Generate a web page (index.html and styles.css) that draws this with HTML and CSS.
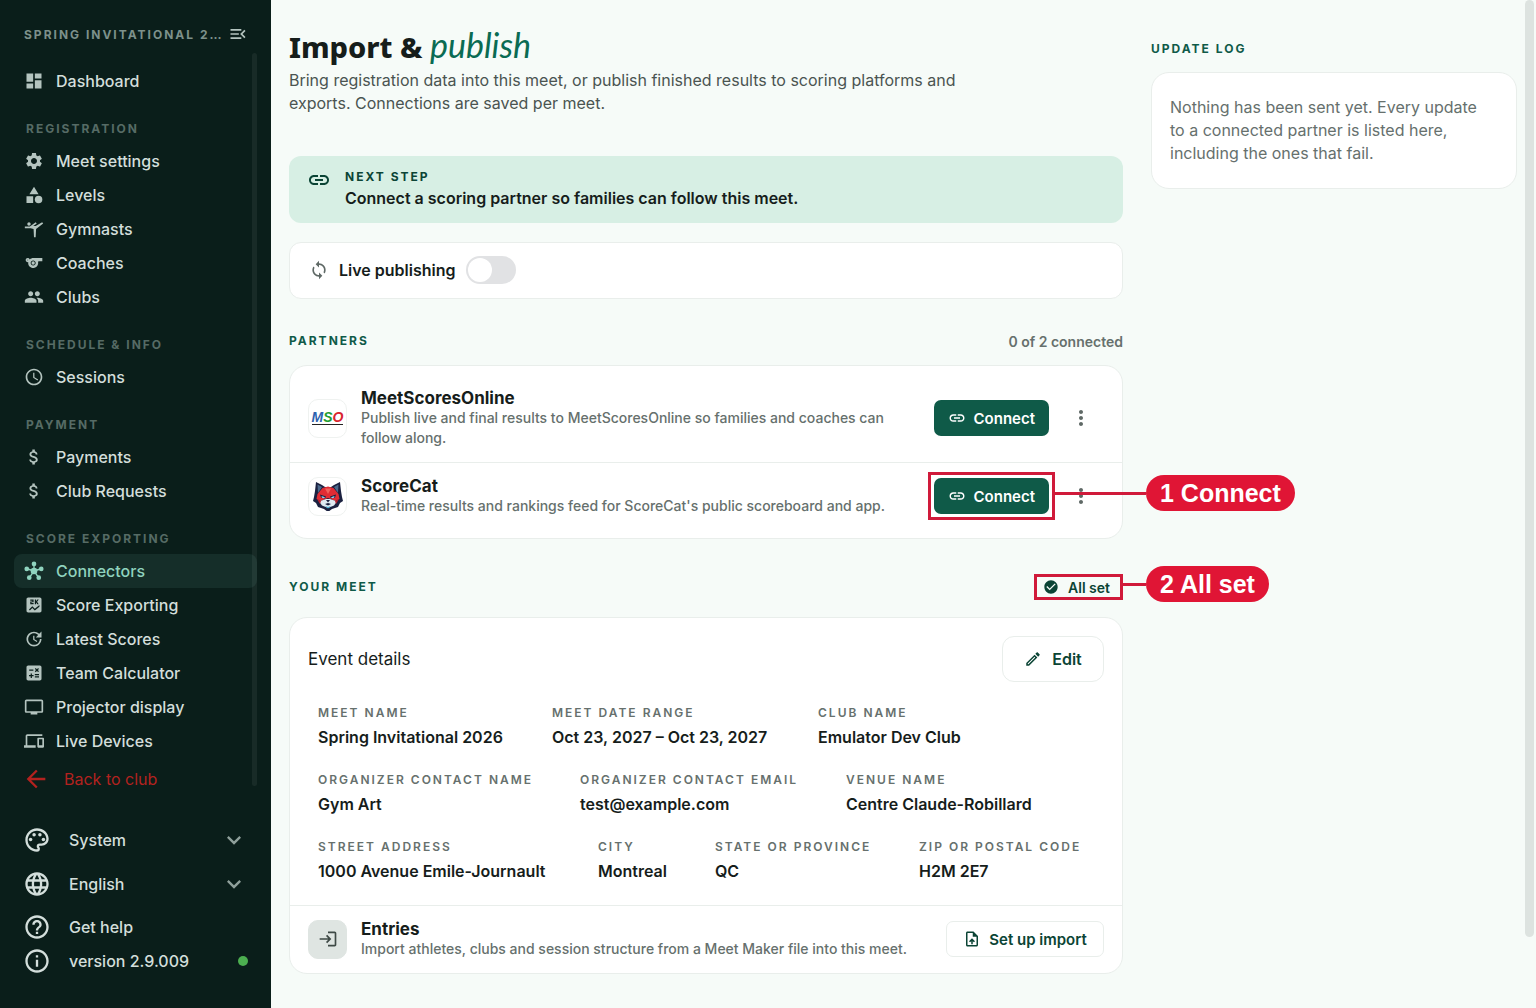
FILE: index.html
```html
<!DOCTYPE html>
<html lang="en">
<head>
<meta charset="utf-8">
<meta name="viewport" content="width=device-width, initial-scale=1">
<title>Import &amp; publish</title>
<link rel="stylesheet" href="styles.css">
</head>
<body>
<svg class="sprite" aria-hidden="true">
  <symbol id="i-link" viewBox="0 0 24 24"><path d="M3.9 12c0-1.71 1.39-3.1 3.1-3.1h4V7H7c-2.76 0-5 2.24-5 5s2.24 5 5 5h4v-1.9H7c-1.71 0-3.1-1.39-3.1-3.1zM8 13h8v-2H8v2zm9-6h-4v1.9h4c1.71 0 3.1 1.39 3.1 3.1s-1.39 3.1-3.1 3.1h-4V17h4c2.76 0 5-2.24 5-5s-2.24-5-5-5z"/></symbol>
  <symbol id="i-money" viewBox="0 0 24 24"><path d="M11.8 10.9c-2.27-.59-3-1.2-3-2.15 0-1.09 1.01-1.85 2.7-1.85 1.78 0 2.44.85 2.5 2.1h2.21c-.07-1.72-1.12-3.3-3.21-3.81V3h-3v2.16c-1.94.42-3.5 1.68-3.5 3.61 0 2.31 1.91 3.46 4.7 4.13 2.5.6 3 1.48 3 2.41 0 .69-.49 1.79-2.7 1.79-2.06 0-2.87-.92-2.98-2.1h-2.2c.12 2.19 1.76 3.42 3.68 3.83V21h3v-2.15c1.95-.37 3.5-1.5 3.5-3.55 0-2.84-2.43-3.81-4.7-4.4z"/></symbol>
  <symbol id="i-chevron" viewBox="0 0 24 24"><path d="M16.59 8.59 12 13.17 7.41 8.59 6 10l6 6 6-6z"/></symbol>
  <symbol id="i-more" viewBox="0 0 24 24"><path d="M12 8c1.1 0 2-.9 2-2s-.9-2-2-2-2 .9-2 2 .9 2 2 2zm0 2c-1.1 0-2 .9-2 2s.9 2 2 2 2-.9 2-2-.9-2-2-2zm0 6c-1.1 0-2 .9-2 2s.9 2 2 2 2-.9 2-2-.9-2-2-2z"/></symbol>
</svg>

<aside class="sidebar">
  <div class="side-head">
    <span class="side-title">SPRING INVITATIONAL 2…</span>
    <button class="icon-btn" aria-label="Collapse menu"><svg class="ic20" viewBox="0 0 24 24"><path d="M3 18h13v-2H3v2zM3 13h10v-2H3v2zm0-7v2h13V6H3zm18 9.59L17.42 12 21 8.41 19.59 7l-5 5 5 5L21 15.59z"/></svg></button>
  </div>
  <nav class="nav">
    <a class="nav-item" href="#"><svg class="ic20" viewBox="0 0 24 24"><path d="M3 13h8V3H3v10zm0 8h8v-6H3v6zm10 0h8V11h-8v10zm0-18v6h8V3h-8z"/></svg>Dashboard</a>
    <h2 class="nav-label">REGISTRATION</h2>
    <a class="nav-item" href="#"><svg class="ic20" viewBox="0 0 24 24"><path d="M19.14 12.94c.04-.3.06-.61.06-.94 0-.32-.02-.64-.07-.94l2.03-1.58c.18-.14.23-.41.12-.61l-1.92-3.32c-.12-.22-.37-.29-.59-.22l-2.39.96c-.5-.38-1.03-.7-1.62-.94l-.36-2.54c-.04-.24-.24-.41-.48-.41h-3.84c-.24 0-.43.17-.47.41l-.36 2.54c-.59.24-1.13.57-1.62.94l-2.39-.96c-.22-.08-.47 0-.59.22L2.74 8.87c-.12.21-.08.47.12.61l2.03 1.58c-.05.3-.09.63-.09.94s.02.64.07.94l-2.03 1.58c-.18.14-.23.41-.12.61l1.92 3.32c.12.22.37.29.59.22l2.39-.96c.5.38 1.03.7 1.62.94l.36 2.54c.05.24.24.41.48.41h3.84c.24 0 .44-.17.47-.41l.36-2.54c.59-.24 1.13-.56 1.62-.94l2.39.96c.22.08.47 0 .59-.22l1.92-3.32c.12-.22.07-.47-.12-.61l-2.01-1.58zM12 15.6c-1.98 0-3.6-1.62-3.6-3.6s1.62-3.6 3.6-3.6 3.6 1.62 3.6 3.6-1.62 3.6-3.6 3.6z"/></svg>Meet settings</a>
    <a class="nav-item" href="#"><svg class="ic20" viewBox="0 0 24 24"><path d="M12 2 6.5 11h11zM3 13.5h8v8H3z"/><circle cx="17.5" cy="17.5" r="4.5"/></svg>Levels</a>
    <a class="nav-item" href="#"><svg class="ic20" viewBox="0 0 24 24"><path d="M4 6c0-1.1.9-2 2-2s2 .9 2 2-.9 2-2 2-2-.9-2-2zM1 9h6l7-5 1.31 1.52-4.17 2.98H14L21.8 4 23 5.4 14.5 12 14 22h-2l-.5-10L8 11H1V9z"/></svg>Gymnasts</a>
    <a class="nav-item" href="#"><svg class="ic20" viewBox="0 0 24 24"><path d="M11.23 6c-1.66 0-3.22.66-4.36 1.73C6.54 6.73 5.61 6 4.5 6 3.12 6 2 7.12 2 8.5S3.12 11 4.5 11c.21 0 .41-.03.61-.08-.05.25-.09.51-.1.78-.18 3.68 2.95 6.68 6.68 6.27 2.55-.28 4.68-2.26 5.19-4.77.15-.71.15-1.4.06-2.06-.09-.6.38-1.13.99-1.13H22V6H11.23zM4.5 9c-.28 0-.5-.22-.5-.5s.22-.5.5-.5.5.22.5.5-.22.5-.5.5zm6.5 6c-1.66 0-3-1.34-3-3s1.34-3 3-3 3 1.34 3 3-1.34 3-3 3z"/><circle cx="11" cy="12" r="2"/></svg>Coaches</a>
    <a class="nav-item" href="#"><svg class="ic20" viewBox="0 0 24 24"><path d="M16 11c1.66 0 2.99-1.34 2.99-3S17.66 5 16 5c-1.66 0-3 1.34-3 3s1.34 3 3 3zm-8 0c1.66 0 2.99-1.34 2.99-3S9.66 5 8 5C6.34 5 5 6.34 5 8s1.34 3 3 3zm0 2c-2.33 0-7 1.17-7 3.5V19h14v-2.5c0-2.33-4.67-3.5-7-3.5zm8 0c-.29 0-.62.02-.97.05 1.16.84 1.97 1.97 1.97 3.45V19h6v-2.5c0-2.33-4.67-3.5-7-3.5z"/></svg>Clubs</a>
    <h2 class="nav-label">SCHEDULE &amp; INFO</h2>
    <a class="nav-item" href="#"><svg class="ic20" viewBox="0 0 24 24"><path d="M11.99 2C6.47 2 2 6.48 2 12s4.47 10 9.99 10C17.52 22 22 17.52 22 12S17.52 2 11.99 2zM12 20c-4.42 0-8-3.58-8-8s3.58-8 8-8 8 3.58 8 8-3.58 8-8 8zm.5-13H11v6l5.25 3.15.75-1.23-4.5-2.67z"/></svg>Sessions</a>
    <h2 class="nav-label">PAYMENT</h2>
    <a class="nav-item" href="#"><svg class="ic20"><use href="#i-money"/></svg>Payments</a>
    <a class="nav-item" href="#"><svg class="ic20"><use href="#i-money"/></svg>Club Requests</a>
    <h2 class="nav-label">SCORE EXPORTING</h2>
    <a class="nav-item active" href="#" aria-current="page"><svg class="ic20" viewBox="0 0 24 24"><path d="M12 12V4M12 12 3.500 9.300M12 12l8.500-2.700M12 12l-5.500 8M12 12l5.500 8" stroke="currentColor" stroke-width="1.600"/><circle cx="12" cy="12" r="4"/><circle cx="12" cy="3.500" r="2.800"/><circle cx="3.300" cy="9.500" r="2.800"/><circle cx="20.700" cy="9.500" r="2.800"/><circle cx="6.300" cy="20" r="2.800"/><circle cx="17.700" cy="20" r="2.800"/></svg>Connectors</a>
    <a class="nav-item" href="#"><svg class="ic20" viewBox="0 0 24 24"><path fill-rule="evenodd" d="M19 3H5c-1.100 0-2 .9-2 2v14c0 1.100.9 2 2 2h14c1.100 0 2-.9 2-2V5c0-1.100-.9-2-2-2zM7.500 5.500h4v3.200H9v.8h2.500v1.500h-4V7.800H10V7H7.500zM13 5.500h1.500v2l1.500-2h1.700l-2 2.700 2 2.800H16l-1.500-2V11H13zM6 17.500l4-4 3 3 5.500-4.500v2L13 18.500l-3-3-3 3z"/></svg>Score Exporting</a>
    <a class="nav-item" href="#"><svg class="ic20" viewBox="0 0 24 24"><path d="M21 10.120h-6.780l2.740-2.820c-2.730-2.700-7.150-2.800-9.880-.1-2.730 2.710-2.730 7.080 0 9.790s7.150 2.710 9.880 0C18.320 15.650 19 14.080 19 12.100h2c0 1.980-.88 4.550-2.640 6.290-3.510 3.480-9.210 3.480-12.720 0-3.500-3.470-3.530-9.110-.02-12.580s9.140-3.470 12.650 0L21 3v7.120zM12.500 8v4.250l3.500 2.080-.72 1.210L11 13V8h1.500z"/></svg>Latest Scores</a>
    <a class="nav-item" href="#"><svg class="ic20" viewBox="0 0 24 24"><path fill-rule="evenodd" d="M19 3H5c-1.100 0-2 .9-2 2v14c0 1.100.9 2 2 2h14c1.100 0 2-.9 2-2V5c0-1.100-.9-2-2-2zm-5.970 4.060L14.090 6l1.410 1.410L16.910 6l1.060 1.060-1.410 1.410 1.410 1.410-1.060 1.060-1.410-1.400-1.410 1.410-1.060-1.060 1.410-1.410-1.410-1.420zM6.250 7.720h5v1.500h-5v-1.500zM11.500 16h-2v2H8v-2H6v-1.500h2v-2h1.500v2h2V16zm6.500 1.250h-5v-1.500h5v1.500zm0-2.500h-5v-1.500h5v1.500z"/></svg>Team Calculator</a>
    <a class="nav-item" href="#"><svg class="ic20" viewBox="0 0 24 24"><path d="M21 3H3c-1.100 0-2 .9-2 2v12c0 1.100.9 2 2 2h5v2h8v-2h5c1.100 0 1.990-.9 1.990-2L23 5c0-1.100-.9-2-2-2zm0 14H3V5h18v12z"/></svg>Projector display</a>
    <a class="nav-item" href="#"><svg class="ic20" viewBox="0 0 24 24"><path d="M4 6h18V4H4c-1.100 0-2 .9-2 2v11H0v3h14v-3H4V6zm19 2h-6c-.55 0-1 .45-1 1v10c0 .55.45 1 1 1h6c.55 0 1-.45 1-1V9c0-.55-.45-1-1-1zm-1 9h-4v-7h4v7z"/></svg>Live Devices</a>
    <a class="nav-back" href="#"><svg class="ic28" viewBox="0 0 24 24"><path d="M20 11H7.830l5.590-5.590L12 4l-8 8 8 8 1.410-1.410L7.830 13H20v-2z"/></svg>Back to club</a>
    <span class="side-scroll"></span>
  </nav>
  <div class="side-foot">
    <button class="foot-item"><svg class="ic28" viewBox="0 0 24 24"><path d="M12 22C6.490 22 2 17.510 2 12S6.490 2 12 2s10 4.040 10 9c0 3.310-2.690 6-6 6h-1.770c-.28 0-.5.22-.5.500 0 .12.050.23.130.33.410.47.640 1.060.640 1.670A2.500 2.500 0 0 1 12 22zm0-18c-4.410 0-8 3.590-8 8s3.590 8 8 8c.28 0 .5-.22.500-.5a.54.54 0 0 0-.14-.35c-.41-.46-.63-1.050-.63-1.650a2.500 2.500 0 0 1 2.500-2.500H16c2.210 0 4-1.790 4-4 0-3.860-3.590-7-8-7z"/><circle cx="6.500" cy="11.500" r="1.500"/><circle cx="9.500" cy="7.500" r="1.500"/><circle cx="14.500" cy="7.500" r="1.500"/><circle cx="17.500" cy="11.500" r="1.500"/></svg><span>System</span><svg class="ic28 dim"><use href="#i-chevron"/></svg></button>
    <button class="foot-item"><svg class="ic28" viewBox="0 0 24 24"><path d="M11.990 2C6.470 2 2 6.480 2 12s4.470 10 9.990 10C17.520 22 22 17.520 22 12S17.520 2 11.990 2zm6.930 6h-2.950c-.32-1.250-.78-2.450-1.380-3.560 1.840.63 3.370 1.910 4.330 3.560zM12 4.040c.83 1.200 1.480 2.530 1.910 3.960h-3.820c.43-1.430 1.080-2.760 1.910-3.960zM4.260 14C4.100 13.360 4 12.690 4 12s.1-1.360.26-2h3.380c-.08.66-.14 1.320-.14 2s.06 1.340.14 2H4.260zm.82 2h2.950c.32 1.250.78 2.450 1.380 3.560-1.840-.63-3.370-1.900-4.330-3.560zm2.950-8H5.080c.96-1.660 2.490-2.930 4.330-3.560C8.810 5.550 8.350 6.750 8.030 8zM12 19.960c-.83-1.200-1.480-2.530-1.910-3.960h3.820c-.43 1.430-1.080 2.760-1.910 3.960zM14.340 14H9.660c-.09-.66-.16-1.320-.16-2s.07-1.350.16-2h4.680c.09.650.16 1.320.16 2s-.07 1.340-.16 2zm.25 5.560c.6-1.110 1.060-2.310 1.380-3.560h2.950c-.96 1.650-2.490 2.930-4.330 3.560zM16.360 14c.08-.66.14-1.320.14-2s-.06-1.340-.14-2h3.380c.16.640.26 1.310.26 2s-.1 1.360-.26 2h-3.380z"/></svg><span>English</span><svg class="ic28 dim"><use href="#i-chevron"/></svg></button>
    <a class="foot-item short first" href="#"><svg class="ic28" viewBox="0 0 24 24"><path d="M11 18h2v-2h-2v2zm1-16C6.480 2 2 6.480 2 12s4.480 10 10 10 10-4.480 10-10S17.520 2 12 2zm0 18c-4.410 0-8-3.590-8-8s3.590-8 8-8 8 3.590 8 8-3.590 8-8 8zm0-14c-2.210 0-4 1.790-4 4h2c0-1.100.9-2 2-2s2 .9 2 2c0 2-3 1.750-3 5h2c0-2.250 3-2.500 3-5 0-2.210-1.790-4-4-4z"/></svg><span>Get help</span></a>
    <div class="foot-item short"><svg class="ic28" viewBox="0 0 24 24"><path d="M11 7h2v2h-2zm0 4h2v6h-2zm1-9C6.480 2 2 6.480 2 12s4.480 10 10 10 10-4.480 10-10S17.520 2 12 2zm0 18c-4.410 0-8-3.590-8-8s3.590-8 8-8 8 3.590 8 8-3.590 8-8 8z"/></svg><span>version 2.9.009</span><i class="status"></i></div>
  </div>
</aside>

<main class="main">
  <div class="content">
    <header class="intro">
      <h1 class="title">Import &amp; <em>publish</em></h1>
      <p class="lead">Bring registration data into this meet, or publish finished results to scoring platforms and exports. Connections are saved per meet.</p>
    </header>

    <section class="banner">
      <svg class="ic24" viewBox="0 0 24 24"><use href="#i-link"/></svg>
      <div>
        <h2 class="overline dark">NEXT STEP</h2>
        <p class="banner-text">Connect a scoring partner so families can follow this meet.</p>
      </div>
    </section>

    <section class="live card">
      <svg class="ic20" viewBox="0 0 24 24"><path d="M12 4V1L8 5l4 4V6c3.310 0 6 2.690 6 6 0 1.010-.25 1.970-.7 2.800l1.460 1.460C19.540 15.030 20 13.570 20 12c0-4.420-3.580-8-8-8zm0 14c-3.310 0-6-2.690-6-6 0-1.010.25-1.970.7-2.800L5.240 7.740C4.460 8.970 4 10.430 4 12c0 4.420 3.580 8 8 8v3l4-4-4-4v3z"/></svg>
      <label for="live">Live publishing</label>
      <input class="switch" type="checkbox" role="switch" id="live">
    </section>

    <div class="section-head">
      <h2 class="overline">PARTNERS</h2>
      <span class="count">0 of 2 connected</span>
    </div>
    <section class="partners card">
      <article class="row">
        <div class="logo mso"><span class="m">M</span><span class="s">S</span><span class="o">O</span></div>
        <div class="row-body">
          <h3 class="row-title">MeetScoresOnline</h3>
          <p class="row-desc">Publish live and final results to MeetScoresOnline so families and coaches can follow along.</p>
        </div>
        <button class="btn primary"><svg class="ic18"><use href="#i-link"/></svg>Connect</button>
        <button class="icon-btn more" aria-label="MeetScoresOnline options"><svg class="ic24"><use href="#i-more"/></svg></button>
      </article>
      <article class="row">
        <div class="logo">
          <svg class="cat" viewBox="0 0 30 30"><path fill="#1b2140" d="M3 1l6 3 3 2h6l3-2 6-3 1 9 1 6 1 4-3 2-2 4-6 2-4 3-4-3-6-2-2-4-3-2 1-4 1-6z"/><path fill="#4c6a8c" d="M4.500 3.500 9 6l-4 6zM25.500 3.500 21 6l4 6z"/><path fill="#e02c34" d="M9.500 7 15 5.500 20.500 7l5 6 1 5-4 2-7.500-3-7.500 3-4-2 1-5z"/><path fill="#f0635c" d="M12 7.500h6L15 13z"/><path fill="#1b2140" d="m7 13.500 6 2-1 2-4-1zM23 13.500l-6 2 1 2 4-1z"/><path fill="#8fd0ee" d="m8.500 15 3.500 1.300-1 .9-2-.5zM21.500 15l-3.500 1.300 1 .9 2-.5z"/><path fill="#dfeaf2" d="m13 18-7 2.500L9 24.500l6 2.500 6-2.500 3-4-7-2.500z"/><path fill="#b81f2e" d="m4 18 4 2-1 3zM26 18l-4 2 1 3z"/><path fill="#1b2140" d="M13 19h4l-2 2.500zM12 23l3-1 3 1-3 1.500z"/><path fill="#3fb2d8" d="m12 25 3 1 3-1-3 2.500z"/></svg>
        </div>
        <div class="row-body">
          <h3 class="row-title">ScoreCat</h3>
          <p class="row-desc">Real-time results and rankings feed for ScoreCat's public scoreboard and app.</p>
        </div>
        <div class="marked marked-connect">
          <button class="btn primary"><svg class="ic18"><use href="#i-link"/></svg>Connect</button>
          <div class="callout"><span class="lead-line"></span><span class="pill">1 Connect</span></div>
        </div>
        <button class="icon-btn more" aria-label="ScoreCat options"><svg class="ic24"><use href="#i-more"/></svg></button>
      </article>
    </section>

    <div class="section-head second">
      <h2 class="overline">YOUR MEET</h2>
      <div class="marked marked-set">
        <span class="all-set"><svg class="ic16" viewBox="0 0 24 24"><path d="M12 2C6.480 2 2 6.480 2 12s4.480 10 10 10 10-4.480 10-10S17.520 2 12 2zm-2 15-5-5 1.410-1.410L10 14.170l7.590-7.590L19 8l-9 9z"/></svg>All set</span>
        <div class="callout"><span class="lead-line"></span><span class="pill">2 All set</span></div>
      </div>
    </div>
    <section class="meet card">
      <div class="details">
        <div class="details-head">
          <h3 class="details-title">Event details</h3>
          <button class="btn outline large"><svg class="ic18" viewBox="0 0 24 24"><path d="m14.060 9.020.92.920L5.920 19H5v-.92l9.060-9.060M17.660 3c-.25 0-.51.1-.7.290l-1.830 1.830 3.750 3.750 1.830-1.830c.39-.39.39-1.020 0-1.410l-2.340-2.340c-.2-.2-.45-.29-.71-.29zm-3.600 3.190L3 17.250V21h3.750L17.810 9.940l-3.750-3.750z"/></svg>Edit</button>
        </div>
        <dl class="fields fields-a">
          <div><dt>MEET NAME</dt><dd>Spring Invitational 2026</dd></div>
          <div><dt>MEET DATE RANGE</dt><dd>Oct 23, 2027 – Oct 23, 2027</dd></div>
          <div><dt>CLUB NAME</dt><dd>Emulator Dev Club</dd></div>
        </dl>
        <dl class="fields fields-b">
          <div><dt>ORGANIZER CONTACT NAME</dt><dd>Gym Art</dd></div>
          <div><dt>ORGANIZER CONTACT EMAIL</dt><dd>test@example.com</dd></div>
          <div><dt>VENUE NAME</dt><dd>Centre Claude-Robillard</dd></div>
        </dl>
        <dl class="fields fields-c">
          <div><dt>STREET ADDRESS</dt><dd>1000 Avenue Emile-Journault</dd></div>
          <div><dt>CITY</dt><dd>Montreal</dd></div>
          <div><dt>STATE OR PROVINCE</dt><dd>QC</dd></div>
          <div><dt>ZIP OR POSTAL CODE</dt><dd>H2M 2E7</dd></div>
        </dl>
      </div>
      <div class="row entries">
        <div class="logo tile"><svg class="ic20" viewBox="0 0 24 24"><path d="M11 7 9.600 8.400l2.600 2.600H2v2h10.200l-2.600 2.600L11 17l5-5-5-5zm9 12h-8v2h8c1.100 0 2-.9 2-2V5c0-1.100-.9-2-2-2h-8v2h8v14z"/></svg></div>
        <div class="row-body">
          <h3 class="row-title">Entries</h3>
          <p class="row-desc">Import athletes, clubs and session structure from a Meet Maker file into this meet.</p>
        </div>
        <button class="btn outline"><svg class="ic18" viewBox="0 0 24 24"><path d="M14 2H6c-1.100 0-1.990.9-1.990 2L4 20c0 1.100.89 2 1.990 2H18c1.100 0 2-.9 2-2V8l-6-6zm4 18H6V4h7v5h5v11zM8 15.010l1.410 1.410L11 14.840V19h2v-4.160l1.590 1.590L16 15.010 12.010 11 8 15.010z"/></svg>Set up import</button>
      </div>
    </section>
  </div>

  <aside class="log">
    <h2 class="overline">UPDATE LOG</h2>
    <p class="log-card card">Nothing has been sent yet. Every update to a connected partner is listed here, including the ones that fail.</p>
  </aside>
  <span class="page-scroll"></span>
</main>
</body>
</html>
```
FILE: styles.css
```css
* { box-sizing: border-box; }
body, h1, h2, h3, p, dl, dd { margin: 0; }
body {
  display: flex;
  min-height: 100vh;
  background: #f6fbf8;
  color: #161d1b;
  font-family: Inter, "Liberation Sans", sans-serif;
  font-size: 16px;
}
button { font: inherit; color: inherit; background: none; border: 0; padding: 0; cursor: pointer; }
a { color: inherit; text-decoration: none; }
svg { fill: currentColor; flex: none; display: block; }
.sprite { position: absolute; width: 0; height: 0; }
.ic16 { width: 16px; height: 16px; }
.ic18 { width: 18px; height: 18px; }
.ic20 { width: 20px; height: 20px; }
.ic24 { width: 24px; height: 24px; }
.ic28 { width: 28px; height: 28px; }

/* Sidebar */
.sidebar {
  flex: none;
  width: 271px;
  background: #0a1e1a;
  color: #d3dedb;
  font-weight: 500;
}
.side-head {
  display: flex;
  align-items: center;
  justify-content: space-between;
  height: 64px;
  padding: 4px 23px 0 24px;
  color: #7d918b;
}
.side-title {
  white-space: nowrap;
  font-size: 12px;
  font-weight: 700;
  letter-spacing: 2px;
}
.side-head .icon-btn { color: #b4c4bf; }
.nav { position: relative; padding: 0 14px; }
.nav-item {
  display: flex;
  align-items: center;
  gap: 12px;
  height: 34px;
  padding-left: 10px;
  border-radius: 8px;
}
.nav-item svg { color: #b4c4bf; }
.nav-item.active, .nav-item.active svg { color: #8fd3be; }
.nav-item.active { background: #152e29; }
.nav-label {
  height: 46px;
  padding: 22px 0 0 12px;
  color: #566b65;
  font-size: 12px;
  line-height: 18px;
  font-weight: 700;
  letter-spacing: 2px;
}
.nav-back {
  display: flex;
  align-items: center;
  gap: 14px;
  height: 42px;
  padding-left: 8px;
  color: #b3221f;
  font-weight: 400;
}
.side-scroll {
  position: absolute;
  top: -11px;
  right: 14px;
  bottom: 14px;
  width: 5px;
  border-radius: 3px;
  background: rgba(255, 255, 255, 0.06);
}
.side-foot { padding: 18px 23px 0; }
.foot-item {
  display: flex;
  align-items: center;
  gap: 18px;
  width: 100%;
  height: 44px;
  text-align: left;
}
.foot-item span { flex: 1; }
.foot-item.short { height: 34px; }
.foot-item.first { margin-top: 4px; }
.dim { color: #8fa09b; }
.status { width: 10px; height: 10px; border-radius: 50%; background: #4caf50; }

/* Main area */
.main {
  position: relative;
  flex: 1;
  min-width: 0;
  display: grid;
  grid-template-columns: minmax(0, 834fr) minmax(0, 366fr);
  gap: 28px;
  align-items: start;
  padding: 28px 19px 24px 18px;
}
.page-scroll {
  position: absolute;
  top: 0;
  right: 2px;
  width: 9px;
  height: 93vh;
  border-radius: 5px;
  background: #dde3e0;
}
.card { background: #fff; border: 1px solid #e9eeeb; border-radius: 18px; }
.overline {
  color: #0f5a48;
  font-size: 12px;
  line-height: 18px;
  font-weight: 700;
  letter-spacing: 2px;
}
.overline.dark { color: #0b4435; }

.title {
  margin-bottom: 4px;
  font-family: "Noto Sans", sans-serif;
  font-size: 29px;
  line-height: 37px;
  font-weight: 800;
}
.title em { color: #0a6b53; font-family: Lato, sans-serif; font-size: 34px; line-height: 34px; font-weight: 400; }
.lead { max-width: 700px; color: #4a5451; line-height: 23px; }

.banner {
  display: flex;
  gap: 14px;
  margin-top: 41px;
  padding: 12px 18px;
  border-radius: 12px;
  background: #d7efe4;
  color: #0b4435;
}
.banner-text { color: #161d1b; font-weight: 600; line-height: 25px; }
.live {
  display: flex;
  align-items: center;
  gap: 10px;
  margin-top: 19px;
  padding: 13px 19px 14px;
  border-radius: 12px;
  color: #5f6966;
}
.live label { color: #161d1b; font-weight: 600; }
.switch {
  appearance: none;
  width: 50px;
  height: 28px;
  margin: 0;
  padding: 2px;
  border-radius: 14px;
  background: #e1e2e4;
}
.switch::before { content: ""; display: block; width: 24px; height: 24px; border-radius: 50%; background: #fff; }
.switch:checked::before { margin-left: auto; }

.section-head {
  display: flex;
  align-items: center;
  justify-content: space-between;
  height: 26px;
  margin: 29px 0 11px;
}
.section-head.second { margin: 35px 0 17px; }
.count { color: #66706d; font-size: 14px; font-weight: 600; }

.partners { padding: 9px 0 8px; }
.row {
  display: flex;
  align-items: center;
  gap: 14px;
  padding: 13px 18px 14px;
}
.row + .row { border-top: 1px solid #e9eeeb; }
.row-body { flex: 1; min-width: 0; }
.row-title { font-size: 17px; font-weight: 700; line-height: 20px; }
.row-desc { max-width: 560px; color: #66706d; font-size: 14px; font-weight: 500; line-height: 20px; }
.logo {
  flex: none;
  display: flex;
  align-items: center;
  justify-content: center;
  width: 39px;
  height: 39px;
  border: 1px solid #eff2f0;
  border-radius: 10px;
}
.logo.tile { background: #dfe5e2; border-color: #dfe5e2; color: #3f4a46; }
.cat { width: 30px; height: 30px; }
.mso {
  font-family: "Liberation Sans", sans-serif;
  font-size: 14px;
  font-weight: 700;
  font-style: italic;
  line-height: 13px;
}
.mso span { border-bottom: 1px solid #222; }
.mso .m { color: #2d62ae; }
.mso .s { color: #1f9e33; }
.mso .o { color: #d8242f; }

.btn {
  display: flex;
  align-items: center;
  justify-content: center;
  gap: 8px;
  height: 36px;
  padding: 0 14px;
  border-radius: 7px;
  font-size: 15px;
  font-weight: 600;
  white-space: nowrap;
}
.btn.primary { min-width: 115px; background: #0f5a48; color: #fff; }
.btn.outline { min-width: 158px; border: 1px solid #e9eeeb; color: #0b4435; background: #fff; }
.btn.large { min-width: 102px; height: 46px; border-radius: 12px; gap: 10px; font-size: 16px; }
.icon-btn { flex: none; }
.more { width: 36px; height: 36px; display: grid; place-items: center; margin-right: 5px; color: #5f6966; }

/* Numbered callouts laid over the page */
.marked { position: relative; }
.marked::after {
  content: "";
  position: absolute;
  inset: -6px;
  border: 3px solid #d01a3a;
  pointer-events: none;
}
.marked-set::after { inset: 0; }
.callout {
  position: absolute;
  z-index: 2;
  left: calc(100% + 5px);
  top: calc(50% - 3px);
  display: flex;
  align-items: center;
  transform: translateY(-50%);
}
.marked-set .callout { left: 100%; }
.lead-line { width: 92px; height: 3px; background: #d01a3a; }
.marked-set .lead-line { width: 23px; }
.pill {
  height: 36px;
  padding: 0 14px;
  border-radius: 18px;
  background: #e01535;
  color: #fff;
  font: 700 25px/36px "Liberation Sans", sans-serif;
  white-space: nowrap;
}
.all-set {
  display: flex;
  align-items: center;
  gap: 9px;
  height: 26px;
  padding: 0 13px 0 9px;
  color: #0b4435;
  font-size: 14px;
  font-weight: 600;
}

.details { padding: 18px 18px 20px; }
.details-head { display: flex; align-items: center; justify-content: space-between; }
.details-title { font-size: 17px; font-weight: 400; }
.fields { display: grid; margin: 21px 0 0 10px; }
.fields + .fields { margin-top: 19px; }
.fields-a { grid-template-columns: 234px 266px 1fr; }
.fields-b { grid-template-columns: 262px 266px 1fr; }
.fields-c { grid-template-columns: 280px 117px 204px 1fr; }
.fields dt { color: #66706d; font-size: 12px; line-height: 20px; font-weight: 600; letter-spacing: 2px; white-space: nowrap; }
.fields dd { font-weight: 600; line-height: 28px; white-space: nowrap; }
.entries { border-top: 1px solid #e9eeeb; }

.log { padding-top: 12px; }
.log-card { margin-top: 14px; padding: 23px 28px 23px 18px; color: #66706d; line-height: 23px; }
```
